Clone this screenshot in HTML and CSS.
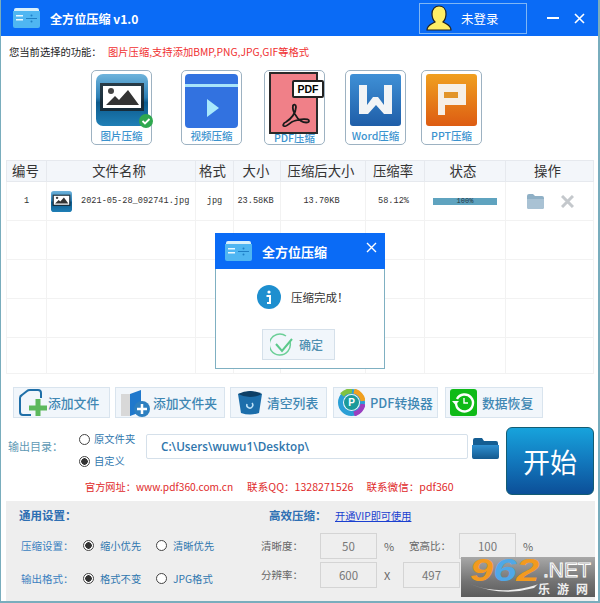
FILE: index.html
```html
<!DOCTYPE html>
<html lang="zh-CN">
<head>
    <meta charset="UTF-8">
    <title>全方位压缩</title>
    <link rel="stylesheet" href="styles.css">
</head>
<body>
<svg class="defs" width="0" height="0">
    <defs>
        <linearGradient id="gPhoto" x1="0" y1="0" x2="0" y2="1">
            <stop offset="0" stop-color="#6fb4dc"/>
            <stop offset="0.45" stop-color="#2b7fb5"/>
            <stop offset="0.55" stop-color="#0c5a8c"/>
            <stop offset="1" stop-color="#1f7fb6"/>
        </linearGradient>
        <linearGradient id="gWord" x1="0.5" y1="0" x2="0.5" y2="1">
            <stop offset="0" stop-color="#3f90d6"/>
            <stop offset="1" stop-color="#1f5ea8"/>
        </linearGradient>
        <linearGradient id="gPpt" x1="0.5" y1="0" x2="0.5" y2="1">
            <stop offset="0" stop-color="#f0a020"/>
            <stop offset="1" stop-color="#dd5c12"/>
        </linearGradient>
        <linearGradient id="gFolder" x1="0" y1="0" x2="0" y2="1">
            <stop offset="0" stop-color="#2f8fd0"/>
            <stop offset="1" stop-color="#13598f"/>
        </linearGradient>
        <symbol id="appLogo" viewBox="0 0 27 20">
            <path d="M1 2q0-2 2-2h21q2 0 2 2v1H1z" fill="#d8f0fc"/>
            <path d="M0 3h27v15q0 2-2 2H2q-2 0-2-2z" fill="#4fb6f2"/>
            <path d="M3 7h7v1.500H3zM3 11h7v1.500H3z" fill="#eaf8ff"/>
            <path d="M13 10h11v1H13z" fill="#1f7fc6"/>
            <circle cx="18.500" cy="7.500" r="1" fill="#1f7fc6"/>
            <circle cx="18.500" cy="13.500" r="1" fill="#1f7fc6"/>
        </symbol>
        <symbol id="photoIcon" viewBox="0 0 52 52">
            <rect width="52" height="52" rx="7" fill="url(#gPhoto)"/>
            <rect x="4" y="9" width="44" height="28" fill="#1a1a1a" opacity="0.75"/>
            <rect x="7" y="12" width="38" height="22" fill="#fff"/>
            <circle cx="15" cy="17" r="3" fill="#444"/>
            <path d="M10 31l9-9 4 4 9-10 11 15z" fill="#333"/>
        </symbol>
    </defs>
</svg>

<div class="window">
    <header class="titlebar">
        <svg class="logo"><use href="#appLogo"/></svg>
        <span class="app-title">全方位压缩 v1.0</span>
        <div class="login">
            <svg width="26" height="26" viewBox="0 0 26 26">
                <path d="M1 25c0-5 5-6 8-8-2-2-3-5-3-8 0-5 3-8 7-8s7 3 7 8c0 3-1 6-3 8 3 2 8 3 8 8z" fill="#ffee66" stroke="#222" stroke-width="1.200"/>
            </svg>
            <span>未登录</span>
        </div>
        <svg class="win-btn min" width="12" height="12" viewBox="0 0 12 12"><path d="M0 6h12" stroke="#fff" stroke-width="2"/></svg>
        <svg class="win-btn" width="11" height="11" viewBox="0 0 11 11"><path d="M1 1l9 9M10 1l-9 9" stroke="#fff" stroke-width="1.600"/></svg>
    </header>

    <div class="func-line">
        <span class="func-label">您当前选择的功能：</span>
        <span class="func-desc">图片压缩,支持添加BMP,PNG,JPG,GIF等格式</span>
    </div>

    <div class="tools">
        <div class="tool t-photo">
            <div class="tool-icon">
                <svg width="52" height="52"><use href="#photoIcon"/></svg>
                <svg class="check" width="14" height="14" viewBox="0 0 14 14">
                    <circle cx="7" cy="7" r="7" fill="#2fa84f"/>
                    <path d="M3.500 7l2.500 2.500 4.500-4.500" fill="none" stroke="#fff" stroke-width="1.800"/>
                </svg>
            </div>
            <span>图片压缩</span>
        </div>
        <div class="tool t-video">
            <svg class="tool-icon" width="53" height="54" viewBox="0 0 53 54">
                <rect width="53" height="54" rx="4" fill="#3272e0"/>
                <rect y="10" width="53" height="3" fill="#a8e4fa"/>
                <path d="M22 25l12 9-12 9z" fill="#a8e8fc"/>
            </svg>
            <span>视频压缩</span>
        </div>
        <div class="tool t-pdf">
            <svg class="tool-icon" width="59" height="62" viewBox="0 0 59 62">
                <rect x="5" y="1" width="47" height="60" fill="#f08088" stroke="#2a2a2a" stroke-width="2"/>
                <rect x="28" y="9" width="30" height="16" rx="1" fill="#fff" stroke="#222" stroke-width="2"/>
                <text x="43" y="21" class="pdf-tag">PDF</text>
                <path d="M20 54c-3 1-2-3 1-4 5-3 10-9 10-15 0-3-3-3-3-1-1 4 3 12 8 15 3 2 8 2 8 0 0-3-9-2-15 0-4 1-7 6-9 5" fill="none" stroke="#1a1a1a" stroke-width="1.800"/>
            </svg>
            <span>PDF压缩</span>
        </div>
        <div class="tool t-word">
            <svg class="tool-icon" width="51" height="52" viewBox="0 0 51 52">
                <rect width="51" height="52" rx="3" fill="url(#gWord)"/>
                <path d="M9 11h8v20l6-8h5l6 8V11h8v29h-8l-8-9-8 9H9z" fill="#f2f4f6"/>
            </svg>
            <span>Word压缩</span>
        </div>
        <div class="tool t-ppt">
            <svg class="tool-icon" width="51" height="52" viewBox="0 0 51 52">
                <rect width="51" height="52" rx="3" fill="url(#gPpt)"/>
                <path d="M12 10h28v21H19v10h-7z" fill="#f6efe6"/>
                <rect x="18" y="18" width="14" height="6" fill="#e2952a"/>
            </svg>
            <span>PPT压缩</span>
        </div>
    </div>

    <table class="files">
        <colgroup>
            <col class="c-no"><col class="c-name"><col class="c-fmt"><col class="c-size">
            <col class="c-after"><col class="c-rate"><col class="c-state"><col class="c-op">
        </colgroup>
        <thead>
            <tr>
                <th>编号</th><th>文件名称</th><th>格式</th><th>大小</th>
                <th>压缩后大小</th><th>压缩率</th><th>状态</th><th>操作</th>
            </tr>
        </thead>
        <tbody>
            <tr>
                <td>1</td>
                <td>
                    <div class="file-cell">
                        <svg width="21" height="21"><use href="#photoIcon"/></svg>
                        <span>2021-05-28_092741.jpg</span>
                    </div>
                </td>
                <td>jpg</td>
                <td>23.58KB</td>
                <td>13.70KB</td>
                <td>58.12%</td>
                <td><div class="progress">100%</div></td>
                <td>
                    <div class="ops">
                        <svg width="17" height="15" viewBox="0 0 17 15">
                            <path d="M0 2q0-2 2-2h4l2 2h7q2 0 2 2v9q0 2-2 2H2q-2 0-2-2z" fill="#8fb0c6"/>
                            <path d="M0 5h17v8q0 2-2 2H2q-2 0-2-2z" fill="#a9c2d4"/>
                        </svg>
                        <svg width="13" height="13" viewBox="0 0 13 13"><path d="M1 1l11 11M12 1L1 12" stroke="#c4c8cc" stroke-width="3"/></svg>
                    </div>
                </td>
            </tr>
            <tr><td></td><td></td><td></td><td></td><td></td><td></td><td></td><td></td></tr>
            <tr><td></td><td></td><td></td><td></td><td></td><td></td><td></td><td></td></tr>
            <tr><td></td><td></td><td></td><td></td><td></td><td></td><td></td><td></td></tr>
            <tr class="last"><td></td><td></td><td></td><td></td><td></td><td></td><td></td><td></td></tr>
        </tbody>
    </table>

    <div class="actions">
        <button class="act a-file">
            <svg width="29" height="28" viewBox="0 0 29 28">
                <path d="M2 9q0-2 2-3l5-4q1-1 3-1h8q3 0 3 3v5M13 26H5q-3 0-3-3V9" fill="none" stroke="#1f6fa8" stroke-width="2"/>
                <path d="M20 10v17M11 19h18" stroke="#5cb85c" stroke-width="5"/>
            </svg>
            添加文件
        </button>
        <button class="act a-folder">
            <svg width="30" height="28" viewBox="0 0 30 28">
                <rect x="1" y="5" width="10" height="22" fill="#d8d8d8"/>
                <path d="M10 5l11-4v22l-11 4z" fill="#1f78cc"/>
                <circle cx="22" cy="20" r="8" fill="#2d7fc0"/>
                <path d="M22 15v10M17 20h10" stroke="#fff" stroke-width="2.500"/>
            </svg>
            添加文件夹
        </button>
        <button class="act a-clear">
            <svg width="26" height="24" viewBox="0 0 26 24">
                <path d="M1 3l12-3 12 3-3 19q-9 3-18 0z" fill="#1c6eab"/>
                <path d="M1 3q12 6 24 0-12-6-24 0" fill="#0d3f66"/>
                <path d="M10 13a3 3 0 1 0 5-1" fill="none" stroke="#bfe2f7" stroke-width="1.500"/>
            </svg>
            清空列表
        </button>
        <button class="act a-pdf">
            <svg width="27" height="27" viewBox="0 0 27 27">
                <circle cx="13.500" cy="13.500" r="11" fill="none" stroke="#2a9fd6" stroke-width="5"/>
                <path d="M4 6a12 12 0 0 1 10-4" fill="none" stroke="#7fc241" stroke-width="5"/>
                <path d="M16 2a12 12 0 0 1 9 10" fill="none" stroke="#f0a020" stroke-width="5"/>
                <path d="M25 15a12 12 0 0 1-9 10" fill="none" stroke="#9b3fc0" stroke-width="5"/>
                <circle cx="13.500" cy="13.500" r="7.500" fill="#1a9a9a"/>
                <text x="13.500" y="17" class="p-mark">P</text>
            </svg>
            PDF转换器
        </button>
        <button class="act a-restore">
            <svg width="27" height="27" viewBox="0 0 27 27">
                <rect width="27" height="27" rx="3" fill="#0fba18"/>
                <path d="M7 10a8.500 8.500 0 1 1-1 4" fill="none" stroke="#fff" stroke-width="2.400"/>
                <path d="M2 12h7l-3.500 4z" fill="#fff"/>
                <path d="M14 9v5h4" fill="none" stroke="#fff" stroke-width="1.400"/>
            </svg>
            数据恢复
        </button>
    </div>

    <div class="output">
        <div class="output-main">
            <div class="dir-row">
                <span class="dir-label">输出目录：</span>
                <div class="dir-radios">
                    <label class="radio"><i></i>原文件夹</label>
                    <label class="radio on"><i></i>自定义</label>
                </div>
                <div class="dir-input">C:\Users\wuwu1\Desktop\</div>
                <svg class="dir-folder" width="27" height="21" viewBox="0 0 27 21">
                    <path d="M1 2q0-2 2-2h7l2 3h12q2 0 2 2v14q0 2-2 2H3q-2 0-2-2z" fill="#145d92"/>
                    <path d="M0 7h27v12q0 2-2 2H2q-2 0-2-2z" fill="url(#gFolder)"/>
                </svg>
            </div>
            <div class="contact">
                <span>官方网址：www.pdf360.com.cn</span>
                <span>联系QQ：1328271526</span>
                <span>联系微信：pdf360</span>
            </div>
        </div>
        <button class="start">开始</button>
    </div>

    <section class="settings">
        <div class="set-left">
            <h3>通用设置：</h3>
            <div class="set-row">
                <span class="set-label">压缩设置：</span>
                <label class="radio on"><i></i>缩小优先</label>
                <label class="radio"><i></i>清晰优先</label>
            </div>
            <div class="set-row">
                <span class="set-label">输出格式：</span>
                <label class="radio on"><i></i>格式不变</label>
                <label class="radio"><i></i>JPG格式</label>
            </div>
        </div>
        <div class="set-right">
            <div class="vip-row">
                <h3>高效压缩：</h3>
                <a href="#">开通VIP即可使用</a>
            </div>
            <div class="num-row">
                <span class="num-label">清晰度：</span>
                <span class="num">50</span>
                <span class="unit">%</span>
                <span class="num-label ratio">宽高比：</span>
                <span class="num">100</span>
                <span class="unit">%</span>
            </div>
            <div class="num-row">
                <span class="num-label">分辨率：</span>
                <span class="num">600</span>
                <span class="unit x">X</span>
                <span class="num">497</span>
            </div>
        </div>
    </section>

    <div class="dialog">
        <div class="dialog-bar">
            <svg class="logo"><use href="#appLogo"/></svg>
            <span>全方位压缩</span>
            <svg class="dialog-close" width="11" height="11" viewBox="0 0 11 11"><path d="M1 1l9 9M10 1l-9 9" stroke="#fff" stroke-width="1.400"/></svg>
        </div>
        <div class="dialog-msg">
            <svg width="24" height="24" viewBox="0 0 24 24">
                <circle cx="12" cy="12" r="12" fill="#1e8fcf"/>
                <circle cx="12" cy="7" r="1.600" fill="#fff"/>
                <path d="M9.500 11H13v7h-3" fill="none" stroke="#fff" stroke-width="2"/>
            </svg>
            <span>压缩完成！</span>
        </div>
        <button class="dialog-ok">
            <svg width="24" height="24" viewBox="0 0 24 24">
                <path d="M20 9a10.500 10.500 0 1 1-4-6" fill="none" stroke="#6bcf97" stroke-width="1.500"/>
                <path d="M6 11l6 7 10-12" fill="none" stroke="#5cc98b" stroke-width="2"/>
            </svg>
            确定
        </button>
    </div>

    <div class="mark">
        <div class="mark-top">
            <span class="mark-num"><b>9</b><em>6</em><b>2</b></span>
            <span class="mark-net">.NET</span>
        </div>
        <div class="mark-bottom">
            <svg width="70" height="12" viewBox="0 0 70 12">
                <path d="M0 1q30 12 66 1l2-1-4 4q-32 9-64-4z" fill="#eee"/>
            </svg>
            <span class="mark-cn">乐游网</span>
        </div>
    </div>
</div>
</body>
</html>
```

FILE: styles.css
```css
* {
    box-sizing: border-box;
}

body {
    margin: 0;
    font-family: "Noto Sans CJK SC", "Noto Sans", sans-serif;
    background-color: #fff;
}

.defs {
    position: absolute;
}

.window {
    position: relative;
    width: 600px;
    height: 603px;
    overflow: hidden;
    background-color: #fff;
    border: 1px solid #79adbd;
    border-top: none;
    border-right-width: 2px;
    border-bottom-width: 2px;
}

/* title bar */
.titlebar {
    display: flex;
    align-items: center;
    height: 36px;
    margin-left: -1px;
    margin-right: -2px;
    padding-left: 13px;
    background-color: #0a6bf6;
    color: #fff;
}

.logo {
    width: 27px;
    height: 20px;
    flex-shrink: 0;
}

.app-title {
    margin-left: 10px;
    font-size: 12.1px;
    font-weight: 700;
}

.login {
    display: flex;
    align-items: center;
    width: 108px;
    height: 31px;
    margin-left: auto;
    margin-right: 20px;
    padding-left: 6px;
    border: 1px solid #7fb6f5;
    font-size: 12.5px;
}

.login span {
    margin-left: 9px;
}

.win-btn {
    margin-right: 15px;
}

/* current function */
.func-line {
    display: flex;
    height: 34px;
    padding: 8px 0 0 8px;
    font-size: 10.3px;
    line-height: 16px;
}

.func-label {
    width: 99px;
    color: #222;
}

.func-desc {
    color: #f03030;
}

/* tool cards */
.tools {
    display: flex;
    align-items: flex-start;
    height: 90px;
    padding-left: 90px;
}

.tool {
    position: relative;
    display: flex;
    flex-direction: column;
    align-items: center;
    width: 61px;
    height: 75px;
    padding-top: 3px;
    border: 1px solid #9db2c2;
    border-radius: 5px;
    color: #3b93cf;
    font-size: 10.5px;
    font-weight: 500;
    line-height: 14px;
}

.tool span {
    margin-top: 3px;
}

.tool-icon {
    position: relative;
    display: block;
    flex-shrink: 0;
    height: 52px;
}

.t-video {
    margin-left: 29px;
}

.t-video .tool-icon {
    height: 54px;
}

.t-video span {
    margin-top: 1px;
}

.t-pdf {
    margin-left: 22px;
    padding-top: 1px;
}

.t-pdf .tool-icon {
    height: 62px;
}

.t-pdf span {
    margin-top: -3px;
}

.t-word {
    margin-left: 20px;
}

.t-ppt {
    margin-left: 15px;
}

.check {
    position: absolute;
    right: -5px;
    bottom: -2px;
}

.pdf-tag {
    font-family: "Liberation Sans", sans-serif;
    font-size: 10.5px;
    font-weight: 700;
    text-anchor: middle;
}

.p-mark {
    font-family: "Liberation Sans", sans-serif;
    font-size: 10px;
    font-weight: 700;
    fill: #fff;
    text-anchor: middle;
}

/* file table */
.files {
    width: 587px;
    margin-left: 5px;
    table-layout: fixed;
    border-collapse: collapse;
    border: 1px solid #efefef;
}

.c-no { width: 40px; }
.c-name { width: 149px; }
.c-fmt { width: 38px; }
.c-size { width: 47px; }
.c-after { width: 85px; }
.c-rate { width: 59px; }
.c-state { width: 81px; }
.c-op { width: 88px; }

.files th {
    height: 20px;
    padding: 0 4px 2px 0;
    background-color: #f3f6fa;
    border: 1px solid #e6e9ee;
    font-size: 13.4px;
    font-weight: 400;
    line-height: 18px;
    color: #333;
}

.files th:first-child,
.files th:nth-child(4) {
    padding-right: 2px;
}

.files td {
    height: 39px;
    padding: 0;
    border: 1px solid #f2f2f2;
    font-family: "Liberation Mono", monospace;
    font-size: 8.6px;
    color: #333;
    text-align: center;
}

.files td:nth-child(n+4) {
    padding-right: 3px;
}

.files tr.last td {
    height: 36px;
}

.file-cell {
    display: flex;
    align-items: center;
    padding-left: 4px;
}

.file-cell span {
    margin-left: 9px;
}

.progress {
    width: 64px;
    height: 7px;
    margin-left: 8px;
    background-color: #5fa3bf;
    font-size: 7px;
    line-height: 7px;
    color: #234;
}

.ops {
    display: flex;
    align-items: center;
    gap: 17px;
    padding-left: 21px;
}

/* action buttons */
.actions {
    display: flex;
    margin: 13px 0 0 12px;
}

.act {
    display: flex;
    align-items: center;
    gap: 3px;
    height: 31px;
    padding: 0 0 0 4px;
    background-color: #f1f6fb;
    border: 1px solid #d9e4ee;
    color: #3f87b3;
    font-family: inherit;
    font-size: 12.8px;
    font-weight: 500;
}

.a-file { width: 97px; gap: 1px; }
.a-folder { width: 110px; margin-left: 5px; }
.a-clear { width: 97px; margin-left: 5px; padding-left: 6px; gap: 4px; }
.a-pdf { width: 105px; margin-left: 6px; gap: 5px; }
.a-restore { width: 98px; margin-left: 7px; gap: 5px; }

/* output directory */
.output {
    display: flex;
    margin-top: 9px;
}

.output-main {
    width: 505px;
}

.dir-row {
    display: flex;
    align-items: flex-start;
    height: 42px;
    padding-left: 7px;
}

.dir-label {
    width: 71px;
    margin-top: 11px;
    font-size: 11px;
    line-height: 16px;
    color: #5f9ab5;
}

.dir-radios {
    display: flex;
    flex-direction: column;
    gap: 4px;
    width: 67px;
    margin-top: 3px;
}

.radio {
    display: flex;
    align-items: center;
    gap: 4px;
    font-size: 10.3px;
    line-height: 18px;
    color: #2f77ae;
    white-space: nowrap;
}

.radio i {
    width: 11px;
    height: 11px;
    flex-shrink: 0;
    background-color: #fff;
    border: 1px solid #444;
    border-radius: 50%;
}

.radio.on i {
    background: radial-gradient(circle, #333 0 3px, #fff 3.500px);
}

.dir-input {
    width: 322px;
    height: 25px;
    margin-top: 7px;
    padding-left: 14px;
    border: 1px solid #d5e0ea;
    border-radius: 2px;
    font-family: "Open Sans", sans-serif;
    font-size: 11.7px;
    font-weight: 600;
    line-height: 23px;
    color: #2e75ac;
}

.dir-folder {
    margin: 11px 0 0 4px;
}

.contact {
    display: flex;
    height: 32px;
    padding: 10px 0 0 84px;
    font-size: 10.2px;
    line-height: 16px;
    color: #e02a2a;
}

.contact span {
    margin-right: 13px;
}

.contact span:first-child {
    margin-right: 14px;
}

.contact span + span {
    font-size: 10.6px;
}

.start {
    width: 88px;
    height: 68px;
    background: linear-gradient(#17a3dc, #1278bd 50%, #0c4f98);
    border: 1px solid #135c73;
    border-radius: 6px;
    color: #fff;
    font-family: inherit;
    font-size: 27px;
}

/* settings panel */
.settings {
    display: flex;
    width: 589px;
    height: 100px;
    margin-left: 5px;
    background-color: #eee;
}

.settings h3 {
    margin: 0;
    font-size: 11.5px;
    font-weight: 700;
    line-height: 16px;
    color: #2d6fb3;
}

.set-left {
    width: 255px;
    padding: 6px 0 0 13px;
}

.set-row {
    display: flex;
    align-items: center;
    height: 33px;
}

.set-row:first-of-type {
    margin-top: 6px;
}

.set-label {
    width: 64px;
    padding-left: 2px;
    font-size: 10.5px;
    color: #3a7fc0;
}

.set-row .radio {
    width: 73px;
    font-size: 10.3px;
    gap: 6px;
}

.vip-row {
    display: flex;
    align-items: center;
    height: 16px;
    margin: 6px 0 0 8px;
}

.vip-row h3 {
    width: 66px;
}

.vip-row a {
    font-size: 10.2px;
    color: #1a3fd0;
}

.num-row {
    display: flex;
    align-items: center;
    height: 27px;
    margin-top: 2px;
    font-size: 10.5px;
    color: #666;
}

.vip-row + .num-row {
    margin-top: 9px;
}

.num-label {
    width: 59px;
}

.num-label.ratio {
    width: 50px;
}

.num {
    width: 57px;
    height: 26px;
    background-color: #eee;
    border: 1px solid #d4d4d4;
    font-size: 11.5px;
    line-height: 24px;
    text-align: center;
    color: #777;
}

.unit {
    width: 32px;
    padding-left: 7px;
    font-size: 11px;
}

.unit.x {
    width: 26px;
}

/* completed dialog */
.dialog {
    position: absolute;
    left: 214px;
    top: 233px;
    width: 170px;
    height: 136px;
    background-color: #fff;
    border: 1px solid #7fb0c2;
    border-top: none;
}

.dialog-bar {
    position: relative;
    display: flex;
    align-items: center;
    height: 36px;
    margin: 0 -1px;
    padding-left: 10px;
    background-color: #0a6bf6;
    color: #fff;
    font-size: 13px;
    font-weight: 700;
}

.dialog-bar span {
    margin-left: 10px;
}

.dialog-close {
    position: absolute;
    right: 8px;
    top: 9px;
}

.dialog-msg {
    display: flex;
    align-items: center;
    gap: 10px;
    margin: 16px 0 0 41px;
    font-size: 11.5px;
    color: #333;
}

.dialog-ok {
    display: flex;
    align-items: center;
    gap: 5px;
    width: 73px;
    height: 31px;
    margin: 20px 0 0 46px;
    padding: 0 0 0 7px;
    background-color: #f1f6fb;
    border: 1px solid #d5e0ea;
    color: #4f8fb0;
    font-family: inherit;
    font-size: 12px;
    font-weight: 500;
}

/* site watermark */
.mark {
    position: absolute;
    left: 460px;
    top: 557px;
    width: 134px;
    height: 40px;
    padding: 1px 0 0 9px;
    background: linear-gradient(#a8a8a8, #747474 60%, #5c5c5c);
}

.mark-top {
    display: flex;
    align-items: center;
    height: 24px;
}

.mark-num {
    width: 73px;
    font-family: "Liberation Sans", sans-serif;
    font-size: 32px;
    font-style: italic;
    font-weight: 700;
    line-height: 24px;
    transform: scaleX(1.3);
    transform-origin: left center;
}

.mark-num b {
    font-weight: 700;
    color: #f39a1f;
}

.mark-num em {
    color: #4fa8e8;
}

.mark-net {
    font-family: "Liberation Sans", sans-serif;
    font-size: 21px;
    line-height: 20px;
    color: #8a8a8a;
    -webkit-text-stroke: 1px #fff;
}

.mark-bottom {
    display: flex;
    align-items: center;
    height: 14px;
}

.mark-cn {
    margin-left: -2px;
    font-size: 12px;
    font-weight: 700;
    line-height: 14px;
    letter-spacing: 7px;
    color: #eee;
}
```
